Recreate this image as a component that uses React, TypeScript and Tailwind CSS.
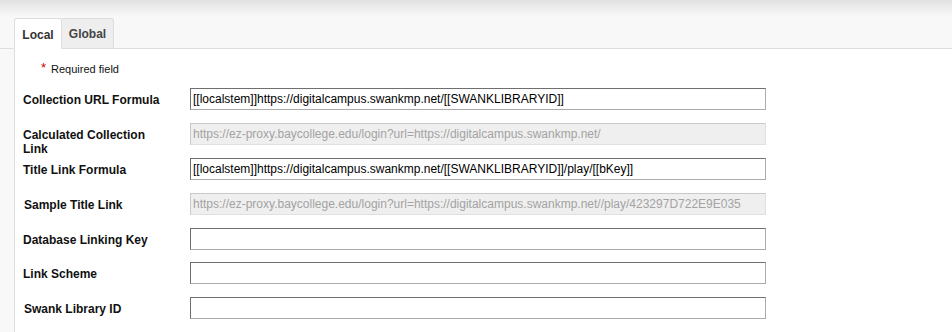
const fields = [
    { label: 'Collection URL Formula', value: '[[localstem]]https://digitalcampus.swankmp.net/[[SWANKLIBRARYID]]', disabled: false, h: 'h-[35px]', shift: false },
    { label: 'Calculated Collection Link', value: 'https://ez-proxy.baycollege.edu/login?url=https://digitalcampus.swankmp.net/', disabled: true, h: 'h-[35px]', shift: false },
    { label: 'Title Link Formula', value: '[[localstem]]https://digitalcampus.swankmp.net/[[SWANKLIBRARYID]]/play/[[bKey]]', disabled: false, h: 'h-[35px]', shift: false },
    { label: 'Sample Title Link', value: 'https://ez-proxy.baycollege.edu/login?url=https://digitalcampus.swankmp.net//play/423297D722E9E035', disabled: true, h: 'h-[35px]', shift: true },
    { label: 'Database Linking Key', value: '', disabled: false, h: 'h-[34px]', shift: false },
    { label: 'Link Scheme', value: '', disabled: false, h: 'h-[35px]', shift: false },
    { label: 'Swank Library ID', value: '', disabled: false, h: 'h-[35px]', shift: true },
]

const App = () => {
    return (
        <div className="w-[952px] h-[332px] overflow-hidden bg-white font-['Liberation_Sans',Arial,sans-serif]">
            {/* tab bar */}
            <div className="h-[49px] flex items-end pl-[14px] border-b border-[#dddddd] bg-[linear-gradient(to_bottom,#e1e1e1,#f8f8f8_16px)]">
                <div className="w-[48px] h-[31px] -mb-px pt-[9px] text-center text-[12px] leading-[14px] font-bold text-[#333333] bg-white border border-[#dddddd] border-b-white rounded-t-[3px]">
                    Local
                </div>
                <div className="w-[52px] h-[30px] pt-[8px] text-center text-[12px] leading-[14px] font-bold text-[#444444] bg-[#eeeeee] border border-b-0 border-l-0 border-[#dddddd] rounded-tr-[3px]">
                    Global
                </div>
            </div>

            <div className="flex h-[283px]">
                <div className="w-[14px] bg-[#f8f8f8]" />
                <div className="flex-1 bg-white border-l border-[#dddddd]">
                    <div className="pt-[13px] pl-[26px] flex items-start text-[11px] leading-[14px] text-[#111111]">
                        <span className="text-[#cc0000] text-[13px] leading-[12px] mr-[5px]">*</span>
                        <span>Required field</span>
                    </div>

                    <div className="mt-[12px]">
                        {fields.map((f) => (
                            <div key={f.label} className={`flex items-start ${f.h}`}>
                                <div className={`w-[175px] pr-[27px] pt-[5px] text-[12px] leading-[14px] font-bold text-[#111111] ${f.shift ? 'pl-[9px]' : 'pl-[8px]'}`}>
                                    {f.label}
                                </div>
                                {f.disabled ? (
                                    <input
                                        type="text"
                                        disabled
                                        defaultValue={f.value}
                                        className="w-[576px] h-[22px] px-[2px] text-[12px] leading-[14px] text-[#a3a3a3] bg-[#efefef] border border-t-[#c9c9c9] border-l-[#c9c9c9] border-b-[#e0e0e0] border-r-[#e0e0e0] outline-none"
                                    />
                                ) : (
                                    <input
                                        type="text"
                                        defaultValue={f.value}
                                        className="w-[576px] h-[22px] px-[2px] text-[12px] leading-[14px] text-black bg-white border border-t-[#6f6f6f] border-l-[#6f6f6f] border-b-[#ababab] border-r-[#ababab] outline-none"
                                    />
                                )}
                            </div>
                        ))}
                    </div>
                </div>
            </div>
        </div>
    )
}

export default App
